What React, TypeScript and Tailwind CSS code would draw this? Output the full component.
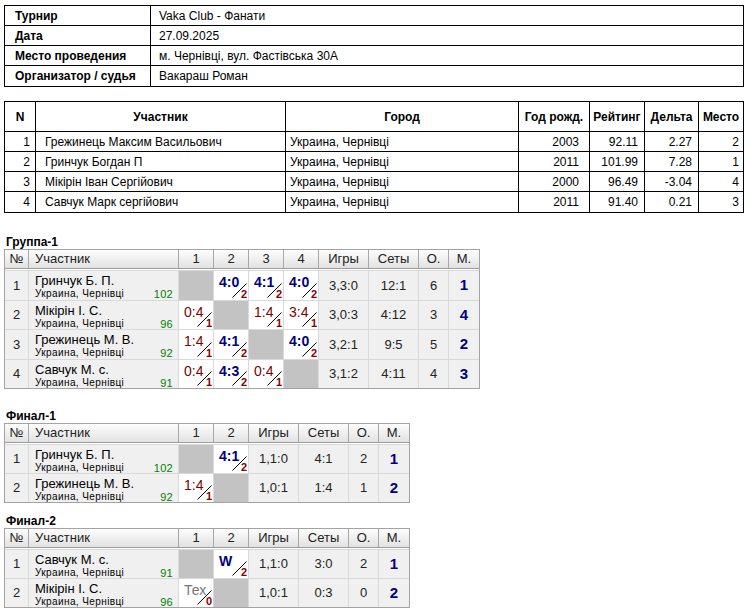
import React from "react";

const info: [string, string][] = [
  ["Турнир", "Vaka Club - Фанати"],
  ["Дата", "27.09.2025"],
  ["Место проведения", "м. Чернівці, вул. Фастівська 30А"],
  ["Организатор / судья", "Вакараш Роман"],
];

const players = [
  ["1", "Грежинець Максим Васильович", "Украина, Чернівці", "2003", "92.11", "2.27", "2"],
  ["2", "Гринчук Богдан П", "Украина, Чернівці", "2011", "101.99", "7.28", "1"],
  ["3", "Мікірін Іван Сергійович", "Украина, Чернівці", "2000", "96.49", "-3.04", "4"],
  ["4", "Савчук Марк сергійович", "Украина, Чернівці", "2011", "91.40", "0.21", "3"],
];

type Sc = null | { s: string; n: string; t: "w" | "l" | "x" };

type Row = {
  name: string;
  rating: string;
  scores: Sc[];
  games: string;
  sets: string;
  pts: string;
  place: string;
};

const group: Row[] = [
  { name: "Гринчук Б. П.", rating: "102", scores: [null, { s: "4:0", n: "2", t: "w" }, { s: "4:1", n: "2", t: "w" }, { s: "4:0", n: "2", t: "w" }], games: "3,3:0", sets: "12:1", pts: "6", place: "1" },
  { name: "Мікірін І. С.", rating: "96", scores: [{ s: "0:4", n: "1", t: "l" }, null, { s: "1:4", n: "1", t: "l" }, { s: "3:4", n: "1", t: "l" }], games: "3,0:3", sets: "4:12", pts: "3", place: "4" },
  { name: "Грежинець М. В.", rating: "92", scores: [{ s: "1:4", n: "1", t: "l" }, { s: "4:1", n: "2", t: "w" }, null, { s: "4:0", n: "2", t: "w" }], games: "3,2:1", sets: "9:5", pts: "5", place: "2" },
  { name: "Савчук М. с.", rating: "91", scores: [{ s: "0:4", n: "1", t: "l" }, { s: "4:3", n: "2", t: "w" }, { s: "0:4", n: "1", t: "l" }, null], games: "3,1:2", sets: "4:11", pts: "4", place: "3" },
];

const final1: Row[] = [
  { name: "Гринчук Б. П.", rating: "102", scores: [null, { s: "4:1", n: "2", t: "w" }], games: "1,1:0", sets: "4:1", pts: "2", place: "1" },
  { name: "Грежинець М. В.", rating: "92", scores: [{ s: "1:4", n: "1", t: "l" }, null], games: "1,0:1", sets: "1:4", pts: "1", place: "2" },
];

const final2: Row[] = [
  { name: "Савчук М. с.", rating: "91", scores: [null, { s: "W", n: "2", t: "w" }], games: "1,1:0", sets: "3:0", pts: "2", place: "1" },
  { name: "Мікірін І. С.", rating: "96", scores: [{ s: "Тех", n: "0", t: "x" }, null], games: "1,0:1", sets: "0:3", pts: "0", place: "2" },
];

function ScoreCell({ sc }: { sc: Sc }) {
  if (!sc) {
    return <div className="w-[35px] h-full shrink-0 bg-[#c3c3c3] border-r border-[#d9d9d9]" />;
  }
  const cls =
    sc.t === "w"
      ? "font-bold text-[#000080]"
      : sc.t === "l"
      ? "text-[#800000]"
      : "text-[#777777]";
  return (
    <div className="relative w-[35px] h-full shrink-0 bg-white border-r border-[#d9d9d9] overflow-hidden">
      <span className={`absolute left-[5px] top-[4px] text-[14px] leading-none whitespace-nowrap ${cls}`}>{sc.s}</span>
      <svg className="absolute right-[1px] bottom-[2px]" width="15" height="15" viewBox="0 0 15 15">
        <line x1="0.5" y1="14.5" x2="14.5" y2="0.5" stroke="#000" strokeWidth="1" />
      </svg>
      <span className="absolute right-[1px] bottom-0 text-[11px] font-bold leading-none text-[#8b0000]">{sc.n}</span>
    </div>
  );
}

function RRTable({ title, rows, rowH, mt }: { title: string; rows: Row[]; rowH: string; mt: string }) {
  const n = rows.length;
  const hcell = "h-full flex items-center justify-center border-r border-[#a8a8a8] shrink-0";
  return (
    <div className={mt}>
      <div className="h-[14px] leading-[14px] text-[12px] font-bold text-black pl-[2px]">{title}</div>
      <div className="w-fit border border-[#a3a3a3] text-[13px] text-[#222]">
        <div className="flex h-[19px] bg-linear-to-b from-[#fdfdfd] to-[#e2e2e2] border-b border-[#9c9c9c]">
          <div className={`${hcell} w-[24px]`}>№</div>
          <div className={`${hcell} w-[150px] !justify-start pl-[6px]`}>Участник</div>
          {Array.from({ length: n }).map((_, i) => (
            <div key={i} className={`${hcell} w-[35px]`}>{i + 1}</div>
          ))}
          <div className={`${hcell} w-[50px]`}>Игры</div>
          <div className={`${hcell} w-[50px]`}>Сеты</div>
          <div className={`${hcell} w-[30px]`}>О.</div>
          <div className="h-full flex items-center justify-center w-[30px] shrink-0">М.</div>
        </div>
        <div className="h-px bg-white" />
        {rows.map((r, ri) => (
          <div key={ri} className={`flex ${rowH} border-t border-[#d9d9d9] bg-[#f0f0f0]`}>
            <div className="w-[24px] shrink-0 h-full flex items-center justify-center border-r border-[#d9d9d9]">{ri + 1}</div>
            <div className="w-[150px] shrink-0 h-full flex flex-col pt-[3px] pl-[6px] pr-[5px] border-r border-[#d9d9d9]">
              <div className="leading-[14px] text-[13px] text-black whitespace-nowrap">{r.name}</div>
              <div className="flex justify-between leading-[12px] text-[10px] text-black">
                <span className="tracking-[0.4px]">Украина, Чернівці</span>
                <span className="text-[#008000] text-[11px] tracking-[0.3px]">{r.rating}</span>
              </div>
            </div>
            {r.scores.map((sc, si) => (
              <ScoreCell key={si} sc={sc} />
            ))}
            <div className="w-[50px] shrink-0 h-full flex items-center justify-center border-r border-[#d9d9d9]">{r.games}</div>
            <div className="w-[50px] shrink-0 h-full flex items-center justify-center border-r border-[#d9d9d9]">{r.sets}</div>
            <div className="w-[30px] shrink-0 h-full flex items-center justify-center border-r border-[#d9d9d9]">{r.pts}</div>
            <div className="w-[30px] shrink-0 h-full flex items-center justify-center text-[15px] font-bold text-[#000080]">{r.place}</div>
          </div>
        ))}
      </div>
    </div>
  );
}

export default function App() {
  const c2 = "h-full flex items-center border-r border-black shrink-0";
  return (
    <div className="w-[750px] h-[612px] overflow-hidden bg-white pl-[4px] pt-[5px] font-['Liberation_Sans',Arial,sans-serif] text-[12px] text-black">
      {/* info table */}
      <div className="w-[740px] border border-black">
        {info.map(([k, v], i) => (
          <div key={i} className={`flex h-[20px] ${i < info.length - 1 ? "border-b border-black" : "h-[19px]"}`}>
            <div className={`${c2} w-[146px] pl-[10px] font-bold`}>{k}</div>
            <div className="h-full flex items-center pl-[8px]">{v}</div>
          </div>
        ))}
      </div>

      {/* players table */}
      <div className="w-[740px] mt-[14px] border border-black">
        <div className="flex h-[30px] border-b border-black font-bold">
          <div className={`${c2} w-[31px] justify-center`}>N</div>
          <div className={`${c2} w-[250px] justify-center`}>Участник</div>
          <div className={`${c2} w-[233px] justify-center`}>Город</div>
          <div className={`${c2} w-[71px] justify-center`}>Год рожд.</div>
          <div className={`${c2} w-[55px] justify-center`}>Рейтинг</div>
          <div className={`${c2} w-[54px] justify-center`}>Дельта</div>
          <div className="h-full flex items-center w-[44px] justify-center">Место</div>
        </div>
        {players.map((p, i) => (
          <div key={i} className={`flex h-[20px] ${i < players.length - 1 ? "border-b border-black" : "h-[19px]"}`}>
            <div className={`${c2} w-[31px] justify-end pr-[5px]`}>{p[0]}</div>
            <div className={`${c2} w-[250px] pl-[9px]`}>{p[1]}</div>
            <div className={`${c2} w-[233px] pl-[4px]`}>{p[2]}</div>
            <div className={`${c2} w-[71px] justify-end pr-[10px]`}>{p[3]}</div>
            <div className={`${c2} w-[55px] justify-end pr-[6px]`}>{p[4]}</div>
            <div className={`${c2} w-[54px] justify-end pr-[6px]`}>{p[5]}</div>
            <div className="h-full flex items-center w-[44px] justify-end pr-[4px]">{p[6]}</div>
          </div>
        ))}
      </div>

      <RRTable title="Группа-1" rows={group} rowH="h-[29.5px]" mt="mt-[22px]" />
      <RRTable title="Финал-1" rows={final1} rowH="h-[29px]" mt="mt-[20px]" />
      <RRTable title="Финал-2" rows={final2} rowH="h-[29px]" mt="mt-[11px]" />
    </div>
  );
}
